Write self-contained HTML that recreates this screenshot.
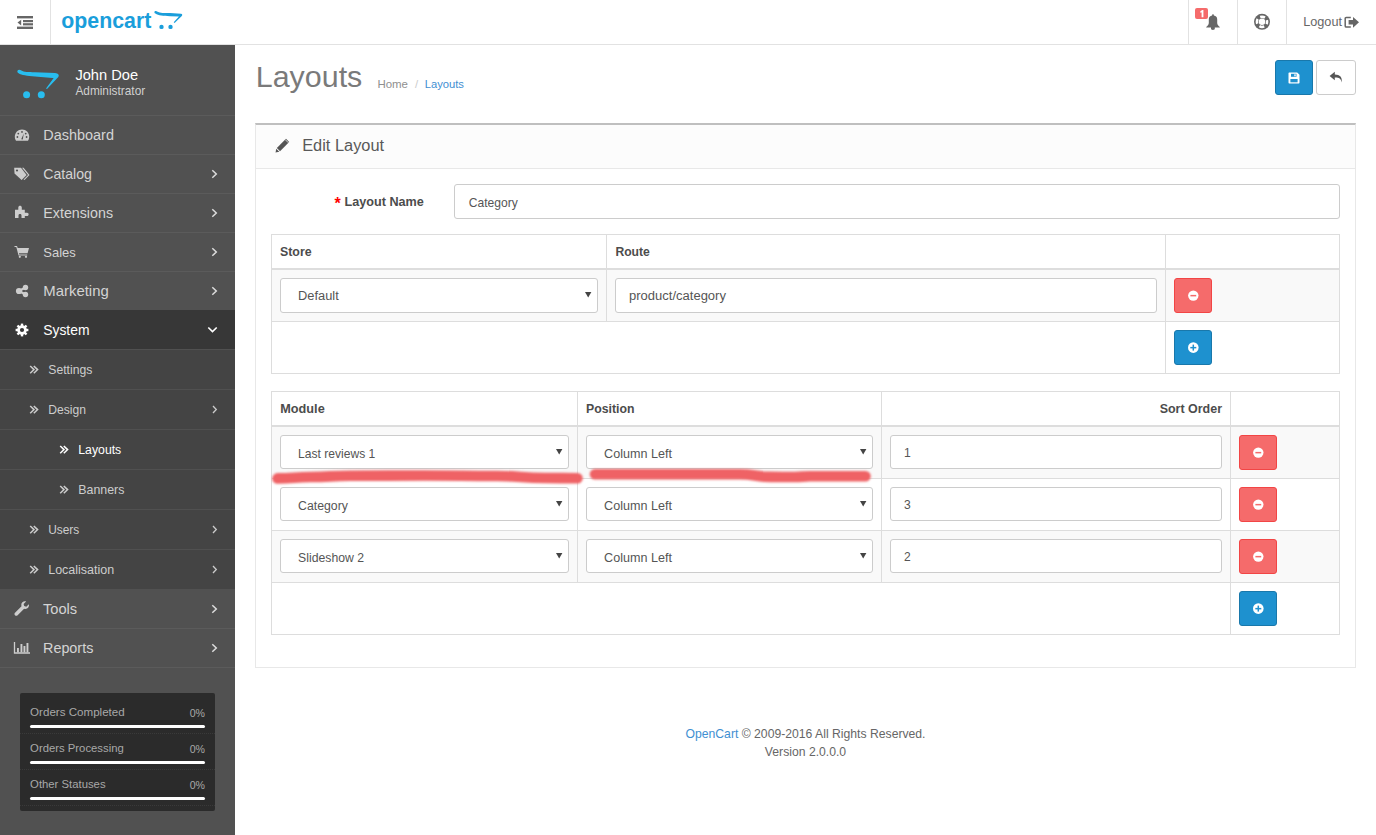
<!DOCTYPE html>
<html><head><meta charset="utf-8"><title>Layouts</title>
<style>
html,body{margin:0;padding:0;width:1376px;height:835px;overflow:hidden;background:#fff;}
body{position:relative;font-family:"Liberation Sans", sans-serif;}
.r{position:absolute;display:block;}
.t{position:absolute;line-height:1;white-space:nowrap;}
</style></head><body>
<div class="r" style="left:0px;top:0px;width:1376px;height:44px;background:#fff"></div>
<div class="r" style="left:0px;top:44px;width:1376px;height:1px;background:#e2e2e2"></div>
<div class="r" style="left:50px;top:0px;width:1px;height:44px;background:#e2e2e2"></div>
<svg class="r" style="left:17px;top:16px" width="16" height="13" viewBox="0 0 16 13"><rect x="0" y="0" width="16" height="2.4" fill="#666"/><rect x="6" y="4" width="10" height="2.2" fill="#666"/><rect x="6" y="7.2" width="10" height="2.2" fill="#666"/><rect x="0" y="10.6" width="16" height="2.4" fill="#666"/><path d="M0.5 6.6 L4.2 3.8 L4.2 9.4 Z" fill="#666"/></svg>
<svg class="r" style="left:58px;top:6px" width="130" height="30" viewBox="0 0 130 30"><text x="3.3" y="21.6" font-family="Liberation Sans" font-weight="bold" font-size="22.6" fill="#1a9edb" textLength="90" lengthAdjust="spacingAndGlyphs">opencart</text><path d="M96.6 5.4 C97.4 4.6 98.6 4.9 99.6 5.7 C102 7.1 106 7 112 7.1 L123 7.7 C124.3 7.8 124.6 9 123.8 9.9 L116.6 16.9 L115.7 16.3 L120.9 10.4 L112 10.3 C105 10.1 100.5 9.6 97.4 7.6 C96.4 6.9 96.1 5.9 96.6 5.4 Z" fill="#1a9edb"/><circle cx="103.5" cy="20.9" r="2.2" fill="#1a9edb"/><circle cx="112.5" cy="20.9" r="2.2" fill="#1a9edb"/></svg>
<div class="r" style="left:1188px;top:0px;width:1px;height:44px;background:#e2e2e2"></div>
<div class="r" style="left:1237px;top:0px;width:1px;height:44px;background:#e2e2e2"></div>
<div class="r" style="left:1286px;top:0px;width:1px;height:44px;background:#e2e2e2"></div>
<svg class="r" style="left:1205px;top:13px" width="16" height="18" viewBox="0 0 16 18"><path d="M8 1.3 C8.6 1.3 8.9 1.8 8.9 2.6 C11 2.9 12.2 4.2 12.2 6.5 L12.2 10 C12.2 11.8 13.6 13.2 14.8 14 L14.8 14.6 L1.2 14.6 L1.2 14 C2.4 13.2 3.8 11.8 3.8 10 L3.8 6.5 C3.8 4.2 5 2.9 7.1 2.6 C7.1 1.8 7.4 1.3 8 1.3 Z M6 14.6 L9.8 14.6 L9.8 15.8 C9.8 16.5 9.2 16.9 7.9 16.9 C6.6 16.9 6 16.5 6 15.8 Z" fill="#666"/></svg>
<div class="r" style="left:1195px;top:8px;width:13px;height:11px;background:#f56b6b;border-radius:2px"></div>
<svg class="r" style="left:1195px;top:8px" width="13" height="11" viewBox="0 0 13 11"><path d="M5.3 3.3 L7.3 2 L8.4 2 L8.4 9.3 L6.6 9.3 L6.6 4.2 L5.6 4.9 Z" fill="#fff"/></svg>
<svg class="r" style="left:1253px;top:13px" width="18" height="18" viewBox="0 0 18 18"><circle cx="9" cy="8.8" r="8" fill="#666"/><circle cx="9" cy="8.8" r="3.2" fill="#fff"/><circle cx="9" cy="8.8" r="5.1" fill="none" stroke="#fff" stroke-width="2.5" stroke-dasharray="5 3.01" stroke-dashoffset="2.5"/></svg>
<div class="t" style="left:1303.2px;top:15.86px;font-size:12.69px;color:#666;">Logout</div>
<svg class="r" style="left:1344px;top:16px" width="16" height="13" viewBox="0 0 16 13"><path d="M6.8 1.5 L2.3 1.5 C1.6 1.5 1.2 1.9 1.2 2.6 L1.2 9.9 C1.2 10.6 1.6 11 2.3 11 L6.8 11" fill="none" stroke="#666" stroke-width="1.5"/><path d="M4.6 4 L9 4 L9 0.9 L15 6.3 L9 11.7 L9 8.6 L4.6 8.6 Z" fill="#666"/></svg>
<div class="r" style="left:0px;top:45px;width:235px;height:790px;background:#515151"></div>
<svg class="r" style="left:15px;top:65px" width="50" height="35" viewBox="0 0 50 35"><path d="M2.6 5.4 C3.6 4.3 5 4.6 6.4 5.6 C9 7.1 13 7.2 20 7.3 L40 8 C43.5 8.3 44.5 10.2 43.3 11.9 L32 23.9 L31 23.5 L38.3 13.6 C38.8 12.9 38.4 12.9 37.5 12.9 L20 11.4 C12 10.9 6.5 10 3.6 8.2 C2.4 7.4 2 6.2 2.6 5.4 Z" fill="#28bdef"/><circle cx="11.6" cy="29.8" r="3.5" fill="#28bdef"/><circle cx="26.3" cy="29.8" r="3.5" fill="#28bdef"/></svg>
<div class="t" style="left:75.4px;top:67.60px;font-size:14.65px;color:#fff;">John Doe</div>
<div class="t" style="left:75.4px;top:86.47px;font-size:11.85px;color:#d0d0d0;">Administrator</div>
<div class="r" style="left:0px;top:115px;width:235px;height:1px;background:#5b5b5b"></div>
<div class="t" style="left:43.3px;top:127.97px;font-size:14.45px;color:#d4d4d4;">Dashboard</div>
<div class="r" style="left:0px;top:154px;width:235px;height:1px;background:#5b5b5b"></div>
<div class="t" style="left:43.3px;top:167.26px;font-size:14.1px;color:#d4d4d4;">Catalog</div>
<div class="r" style="left:0px;top:193px;width:235px;height:1px;background:#5b5b5b"></div>
<svg class="r" style="left:211px;top:169px" width="7" height="10" viewBox="0 0 7 10"><path d="M1.3 1.2 L5.3 5 L1.3 8.8" fill="none" stroke="#ddd" stroke-width="1.5"/></svg>
<div class="t" style="left:43.3px;top:206.14px;font-size:14.25px;color:#d4d4d4;">Extensions</div>
<div class="r" style="left:0px;top:232px;width:235px;height:1px;background:#5b5b5b"></div>
<svg class="r" style="left:211px;top:208px" width="7" height="10" viewBox="0 0 7 10"><path d="M1.3 1.2 L5.3 5 L1.3 8.8" fill="none" stroke="#ddd" stroke-width="1.5"/></svg>
<div class="t" style="left:43.3px;top:246.20px;font-size:12.99px;color:#d4d4d4;">Sales</div>
<div class="r" style="left:0px;top:271px;width:235px;height:1px;background:#5b5b5b"></div>
<svg class="r" style="left:211px;top:247px" width="7" height="10" viewBox="0 0 7 10"><path d="M1.3 1.2 L5.3 5 L1.3 8.8" fill="none" stroke="#ddd" stroke-width="1.5"/></svg>
<div class="t" style="left:43.3px;top:283.57px;font-size:14.92px;color:#d4d4d4;">Marketing</div>
<div class="r" style="left:0px;top:310px;width:235px;height:1px;background:#5b5b5b"></div>
<svg class="r" style="left:211px;top:286px" width="7" height="10" viewBox="0 0 7 10"><path d="M1.3 1.2 L5.3 5 L1.3 8.8" fill="none" stroke="#ddd" stroke-width="1.5"/></svg>
<div class="r" style="left:0px;top:310px;width:235px;height:39px;background:#373737"></div>
<div class="t" style="left:43.2px;top:323.64px;font-size:13.89px;color:#fff;">System</div>
<svg class="r" style="left:207px;top:326px" width="11" height="8" viewBox="0 0 11 8"><path d="M1.3 1.5 L5.5 5.6 L9.7 1.5" fill="none" stroke="#fff" stroke-width="1.6"/></svg>
<div class="r" style="left:0px;top:349px;width:235px;height:240px;background:#444"></div>
<div class="r" style="left:0px;top:349px;width:235px;height:1px;background:#505050"></div>
<div class="t" style="left:48.3px;top:363.77px;font-size:12.2px;color:#cdcdcd;">Settings</div>
<svg class="r" style="left:29px;top:365px" width="11" height="10" viewBox="0 0 11 10"><path d="M1.2 1 L5 4.6 L1.2 8.2 M4.8 1 L8.6 4.6 L4.8 8.2" fill="none" stroke="#cdcdcd" stroke-width="1.5"/></svg>
<div class="r" style="left:0px;top:389px;width:235px;height:1px;background:#505050"></div>
<div class="t" style="left:48.3px;top:403.82px;font-size:12.14px;color:#cdcdcd;">Design</div>
<svg class="r" style="left:29px;top:405px" width="11" height="10" viewBox="0 0 11 10"><path d="M1.2 1 L5 4.6 L1.2 8.2 M4.8 1 L8.6 4.6 L4.8 8.2" fill="none" stroke="#cdcdcd" stroke-width="1.5"/></svg>
<svg class="r" style="left:212px;top:405px" width="6" height="9" viewBox="0 0 6 9"><path d="M1 1 L4.3 4.5 L1 8" fill="none" stroke="#ccc" stroke-width="1.3"/></svg>
<div class="r" style="left:0px;top:429px;width:235px;height:1px;background:#505050"></div>
<div class="t" style="left:78.3px;top:444.00px;font-size:12.28px;color:#fff;">Layouts</div>
<svg class="r" style="left:59px;top:445px" width="11" height="10" viewBox="0 0 11 10"><path d="M1.2 1 L5 4.6 L1.2 8.2 M4.8 1 L8.6 4.6 L4.8 8.2" fill="none" stroke="#fff" stroke-width="1.5"/></svg>
<div class="r" style="left:0px;top:469px;width:235px;height:1px;background:#505050"></div>
<div class="t" style="left:78.3px;top:483.92px;font-size:12.38px;color:#cdcdcd;">Banners</div>
<svg class="r" style="left:59px;top:485px" width="11" height="10" viewBox="0 0 11 10"><path d="M1.2 1 L5 4.6 L1.2 8.2 M4.8 1 L8.6 4.6 L4.8 8.2" fill="none" stroke="#cdcdcd" stroke-width="1.5"/></svg>
<div class="r" style="left:0px;top:509px;width:235px;height:1px;background:#505050"></div>
<div class="t" style="left:48.2px;top:525.02px;font-size:11.91px;color:#cdcdcd;">Users</div>
<svg class="r" style="left:29px;top:525px" width="11" height="10" viewBox="0 0 11 10"><path d="M1.2 1 L5 4.6 L1.2 8.2 M4.8 1 L8.6 4.6 L4.8 8.2" fill="none" stroke="#cdcdcd" stroke-width="1.5"/></svg>
<svg class="r" style="left:212px;top:525px" width="6" height="9" viewBox="0 0 6 9"><path d="M1 1 L4.3 4.5 L1 8" fill="none" stroke="#ccc" stroke-width="1.3"/></svg>
<div class="r" style="left:0px;top:549px;width:235px;height:1px;background:#505050"></div>
<div class="t" style="left:48.2px;top:563.92px;font-size:12.5px;color:#cdcdcd;">Localisation</div>
<svg class="r" style="left:29px;top:565px" width="11" height="10" viewBox="0 0 11 10"><path d="M1.2 1 L5 4.6 L1.2 8.2 M4.8 1 L8.6 4.6 L4.8 8.2" fill="none" stroke="#cdcdcd" stroke-width="1.5"/></svg>
<svg class="r" style="left:212px;top:565px" width="6" height="9" viewBox="0 0 6 9"><path d="M1 1 L4.3 4.5 L1 8" fill="none" stroke="#ccc" stroke-width="1.3"/></svg>
<div class="t" style="left:43px;top:601.80px;font-size:14.65px;color:#d4d4d4;">Tools</div>
<div class="r" style="left:0px;top:628px;width:235px;height:1px;background:#5b5b5b"></div>
<svg class="r" style="left:211px;top:604px" width="7" height="10" viewBox="0 0 7 10"><path d="M1.3 1.2 L5.3 5 L1.3 8.8" fill="none" stroke="#ddd" stroke-width="1.5"/></svg>
<div class="t" style="left:43px;top:641.02px;font-size:14.39px;color:#d4d4d4;">Reports</div>
<div class="r" style="left:0px;top:667px;width:235px;height:1px;background:#5b5b5b"></div>
<svg class="r" style="left:211px;top:643px" width="7" height="10" viewBox="0 0 7 10"><path d="M1.3 1.2 L5.3 5 L1.3 8.8" fill="none" stroke="#ddd" stroke-width="1.5"/></svg>
<svg class="r" style="left:14px;top:128.3px" width="16" height="14" viewBox="0 0 16 14"><path d="M8 1.5 C3.9 1.5 0.8 4.7 0.8 8.7 C0.8 10.2 1.2 11.6 2 12.7 L14 12.7 C14.8 11.6 15.2 10.2 15.2 8.7 C15.2 4.7 12.1 1.5 8 1.5 Z" fill="#cdcdcd"/><g fill="#515151"><circle cx="3.4" cy="9" r="0.9"/><circle cx="4.3" cy="5.6" r="0.9"/><circle cx="8" cy="3.9" r="0.9"/><circle cx="11.7" cy="5.6" r="0.9"/><circle cx="12.6" cy="9" r="0.9"/><path d="M7.2 11.3 L9.8 5.5 L8.8 11.5 Z"/></g></svg>
<svg class="r" style="left:13px;top:166px" width="18" height="16" viewBox="0 0 18 16"><path d="M1.2 1.8 L8 1.8 L13.6 9 L8.6 14 L1.5 7.5 Z" fill="#cdcdcd"/><circle cx="4" cy="4.5" r="1.1" fill="#515151"/><path d="M9 1.8 L10.6 1.8 L16.5 9 L11.5 14 L10.5 13.4 L15 9 Z" fill="#cdcdcd"/></svg>
<svg class="r" style="left:14px;top:204px" width="16" height="15" viewBox="0 0 16 15"><path d="M1 5.8 L4.3 5.8 L4.3 3.4 C4.3 1.3 7.8 1.3 7.8 3.4 L7.8 5.8 L10.8 5.8 L10.8 8.8 L13 8.8 C15.2 8.8 15.2 12.1 13 12.1 L10.8 12.1 L10.8 14 L7.5 14 L7.5 11.4 C7.5 9.5 4.5 9.5 4.5 11.4 L4.5 14 L1 14 Z" fill="#cdcdcd"/></svg>
<svg class="r" style="left:14px;top:245px" width="16" height="13" viewBox="0 0 16 13"><path d="M0.5 1 L3 1 L3.7 3 L15 3 L13.6 8.3 L4.9 8.3 L5.3 9.5 L13.2 9.5 L13.2 10.4 L4.5 10.4 L2.3 2 L0.5 2 Z" fill="#cdcdcd"/><circle cx="5.8" cy="11.8" r="1.1" fill="#cdcdcd"/><circle cx="12" cy="11.8" r="1.1" fill="#cdcdcd"/></svg>
<svg class="r" style="left:14px;top:283px" width="16" height="16" viewBox="0 0 16 16"><circle cx="5" cy="8" r="3.1" fill="#cdcdcd"/><circle cx="11.5" cy="4.5" r="2.7" fill="#cdcdcd"/><circle cx="11.5" cy="11.5" r="2.7" fill="#cdcdcd"/><path d="M5 8 L11.5 4.5 M5 8 L11.5 11.5" stroke="#cdcdcd" stroke-width="2.4"/></svg>
<svg class="r" style="left:15px;top:323px" width="14" height="14" viewBox="0 0 14 14"><circle cx="7" cy="7" r="4.8" fill="#fff"/><g fill="#fff"><rect x="5.8" y="0.6" width="2.4" height="3"/><rect x="5.8" y="10.4" width="2.4" height="3"/><rect x="0.6" y="5.8" width="3" height="2.4"/><rect x="10.4" y="5.8" width="3" height="2.4"/><rect x="5.8" y="0.6" width="2.4" height="3" transform="rotate(45 7 7)"/><rect x="5.8" y="10.4" width="2.4" height="3" transform="rotate(45 7 7)"/><rect x="0.6" y="5.8" width="3" height="2.4" transform="rotate(45 7 7)"/><rect x="10.4" y="5.8" width="3" height="2.4" transform="rotate(45 7 7)"/></g><circle cx="7" cy="7" r="2.1" fill="#373737"/></svg>
<svg class="r" style="left:14px;top:601px" width="16" height="15" viewBox="0 0 16 15"><path d="M14.8 3.2 C15.5 5.3 14.2 8 11.5 8 C10.9 8 10.5 7.9 10.1 7.8 L3.6 14.3 C2.9 15 1.7 15 1 14.3 C0.3 13.6 0.3 12.4 1 11.7 L7.5 5.2 C7.4 4.8 7.3 4.4 7.3 3.8 C7.3 1.1 10 -0.2 12.1 0.5 L9.6 3 L10.2 5.1 L12.3 5.7 Z" fill="#cdcdcd"/></svg>
<svg class="r" style="left:13px;top:641px" width="18" height="14" viewBox="0 0 18 14"><path d="M1.5 1 L1.5 12 L17 12" fill="none" stroke="#cdcdcd" stroke-width="1.3"/><g fill="#cdcdcd"><rect x="4" y="7" width="1.9" height="4.3"/><rect x="7.5" y="3" width="1.9" height="8.3"/><rect x="10.5" y="5" width="1.9" height="6.3"/><rect x="13.5" y="2" width="1.9" height="9.3"/></g></svg>
<div class="r" style="left:20px;top:693px;width:195px;height:118px;background:#2b2b2b;border-radius:2px"></div>
<div class="t" style="left:30.1px;top:706.70px;font-size:11.58px;color:#a8a8a8;">Orders Completed</div>
<div class="r" style="left:20px;top:733px;width:195px;height:0px;border-top:1px dotted #3a3a3a"></div>
<div class="t" style="right:1171px;top:707.54px;font-size:10.59px;color:#a8a8a8;">0%</div>
<div class="r" style="left:30px;top:725px;width:175px;height:3px;background:#fff;border-radius:1.5px"></div>
<div class="t" style="left:30.1px;top:742.92px;font-size:11.32px;color:#a8a8a8;">Orders Processing</div>
<div class="r" style="left:20px;top:769px;width:195px;height:0px;border-top:1px dotted #3a3a3a"></div>
<div class="t" style="right:1171px;top:743.54px;font-size:10.59px;color:#a8a8a8;">0%</div>
<div class="r" style="left:30px;top:761px;width:175px;height:3px;background:#fff;border-radius:1.5px"></div>
<div class="t" style="left:30.1px;top:778.92px;font-size:11.32px;color:#a8a8a8;">Other Statuses</div>
<div class="r" style="left:20px;top:805px;width:195px;height:0px;border-top:1px dotted #3a3a3a"></div>
<div class="t" style="right:1171px;top:779.54px;font-size:10.59px;color:#a8a8a8;">0%</div>
<div class="r" style="left:30px;top:797px;width:175px;height:3px;background:#fff;border-radius:1.5px"></div>
<div class="t" style="left:255.8px;top:60.96px;font-size:30.41px;color:#7a7a7a;">Layouts</div>
<div class="t" style="left:377.4px;top:78.89px;font-size:11.47px;color:#8f8f8f;">Home</div>
<div class="t" style="left:415px;top:78.95px;font-size:11.4px;color:#ccc;">/</div>
<div class="t" style="left:424.7px;top:79.10px;font-size:11.22px;color:#3f8fd2;">Layouts</div>
<div class="r" style="left:1275px;top:60px;width:38px;height:35px;background:#1e91cf;border:1px solid #1978ab;box-sizing:border-box;border-radius:3px"></div>
<svg class="r" style="left:1288px;top:72px" width="12" height="12" viewBox="0 0 12 12"><path d="M0.5 1.5 C0.5 0.9 0.9 0.5 1.5 0.5 L9.2 0.5 L11.5 2.8 L11.5 10.5 C11.5 11.1 11.1 11.5 10.5 11.5 L1.5 11.5 C0.9 11.5 0.5 11.1 0.5 10.5 Z" fill="#fff"/><rect x="3" y="1.8" width="5.5" height="3" fill="#1e91cf"/><rect x="6.3" y="2.3" width="1.4" height="2" fill="#fff"/><rect x="2.4" y="7" width="7.2" height="3.3" fill="#1e91cf"/></svg>
<div class="r" style="left:1316px;top:60px;width:40px;height:35px;background:#fff;border:1px solid #ccc;box-sizing:border-box;border-radius:3px"></div>
<svg class="r" style="left:1329px;top:71px" width="14" height="12" viewBox="0 0 14 12"><path d="M5.8 0.8 L0.6 5 L5.8 9.2 L5.8 6.6 C9.8 6.4 12 7.6 12.6 11.5 C13.6 6.2 11 3.4 5.8 3.4 Z" fill="#555"/></svg>
<div class="r" style="left:255px;top:123px;width:1101px;height:545px;background:#fff;border:1px solid #e8e8e8;border-top:2px solid #bfbfbf;box-sizing:border-box"></div>
<div class="r" style="left:256px;top:125px;width:1099px;height:43px;background:#fcfcfc"></div>
<div class="r" style="left:256px;top:168px;width:1099px;height:1px;background:#e8e8e8"></div>
<svg class="r" style="left:275px;top:138px" width="15" height="15" viewBox="0 0 15 15"><path d="M11 0.8 L14.2 4 L5 13.2 L1.8 10 Z" fill="#555"/><path d="M1.3 10.7 L4.3 13.7 L0.5 14.5 Z" fill="#555"/><path d="M10.2 1.6 L13.4 4.8" stroke="#fcfcfc" stroke-width="0.8"/><path d="M2.4 11.2 L3.8 12.6" stroke="#fcfcfc" stroke-width="0.6"/></svg>
<div class="t" style="left:302.2px;top:137.03px;font-size:16.39px;color:#595959;">Edit Layout</div>
<div class="t" style="left:334.6px;top:196.46px;font-size:16px;color:#f00;font-weight:bold;">*</div>
<div class="t" style="left:344.6px;top:195.71px;font-size:12.63px;color:#4c4c4c;font-weight:bold;">Layout Name</div>
<div class="r" style="left:454px;top:184px;width:886px;height:35px;background:#fff;border:1px solid #ccc;box-sizing:border-box;border-radius:3px"></div>
<div class="t" style="left:468.8px;top:196.56px;font-size:12.1px;color:#555;">Category</div>
<div class="r" style="left:271px;top:234px;width:1069px;height:140px;background:#fff;border:1px solid #ddd;box-sizing:border-box"></div>
<div class="r" style="left:272px;top:270px;width:1067px;height:51px;background:#f9f9f9"></div>
<div class="r" style="left:272px;top:268px;width:1067px;height:2px;background:#ddd"></div>
<div class="r" style="left:272px;top:321px;width:1067px;height:1px;background:#ddd"></div>
<div class="r" style="left:606px;top:235px;width:1px;height:86px;background:#ddd"></div>
<div class="r" style="left:1165px;top:235px;width:1px;height:138px;background:#ddd"></div>
<div class="t" style="left:280px;top:246.14px;font-size:12.36px;color:#4c4c4c;font-weight:bold;">Store</div>
<div class="t" style="left:615.4px;top:246.29px;font-size:12.18px;color:#4c4c4c;font-weight:bold;">Route</div>
<div class="r" style="left:280px;top:278px;width:318px;height:35px;background:#fff;border:1px solid #ccc;box-sizing:border-box;border-radius:3px"></div>
<div class="t" style="left:298.1px;top:290.32px;font-size:12.85px;color:#555;">Default</div>
<svg class="r" style="left:585px;top:291.8px" width="7" height="6" viewBox="0 0 7 6"><path d="M0 0 L6.4 0 L3.2 5.6 Z" fill="#444"/></svg>
<div class="r" style="left:615px;top:278px;width:542px;height:35px;background:#fff;border:1px solid #ccc;box-sizing:border-box;border-radius:3px"></div>
<div class="t" style="left:629px;top:289.28px;font-size:13.02px;color:#555;">product/category</div>
<div class="r" style="left:1174px;top:278px;width:38px;height:35px;background:#f56b6b;border:1px solid #f24545;box-sizing:border-box;border-radius:3px"></div>
<svg class="r" style="left:1187px;top:289px" width="13" height="13" viewBox="0 0 13 13"><circle cx="6.3" cy="6.6" r="5.2" fill="#fff"/><rect x="3.4" y="5.9" width="5.8" height="1.5" fill="#f56b6b"/></svg>
<div class="r" style="left:1174px;top:330px;width:38px;height:35px;background:#1e91cf;border:1px solid #1978ab;box-sizing:border-box;border-radius:3px"></div>
<svg class="r" style="left:1187px;top:341px" width="13" height="13" viewBox="0 0 13 13"><circle cx="6.3" cy="6.6" r="5.3" fill="#fff"/><rect x="3.3" y="5.9" width="6" height="1.5" fill="#1e91cf"/><rect x="5.55" y="3.6" width="1.5" height="6" fill="#1e91cf"/></svg>
<div class="r" style="left:271px;top:391px;width:1069px;height:244px;background:#fff;border:1px solid #ddd;box-sizing:border-box"></div>
<div class="r" style="left:272px;top:427px;width:1067px;height:51px;background:#f9f9f9"></div>
<div class="r" style="left:272px;top:531px;width:1067px;height:51px;background:#f9f9f9"></div>
<div class="r" style="left:272px;top:425px;width:1067px;height:2px;background:#ddd"></div>
<div class="r" style="left:272px;top:478px;width:1067px;height:1px;background:#ddd"></div>
<div class="r" style="left:272px;top:530px;width:1067px;height:1px;background:#ddd"></div>
<div class="r" style="left:272px;top:582px;width:1067px;height:1px;background:#ddd"></div>
<div class="r" style="left:577px;top:392px;width:1px;height:190px;background:#ddd"></div>
<div class="r" style="left:881px;top:392px;width:1px;height:190px;background:#ddd"></div>
<div class="r" style="left:1230px;top:392px;width:1px;height:242px;background:#ddd"></div>
<div class="t" style="left:280.3px;top:402.66px;font-size:12.69px;color:#4c4c4c;font-weight:bold;">Module</div>
<div class="t" style="left:586px;top:403.01px;font-size:12.27px;color:#4c4c4c;font-weight:bold;">Position</div>
<div class="t" style="right:154px;top:402.84px;font-size:12.48px;color:#4c4c4c;font-weight:bold;">Sort Order</div>
<div class="r" style="left:280px;top:435px;width:289px;height:34px;background:#fff;border:1px solid #ccc;box-sizing:border-box;border-radius:3px"></div>
<div class="t" style="left:298.1px;top:447.97px;font-size:12.08px;color:#555;">Last reviews 1</div>
<svg class="r" style="left:556px;top:448.8px" width="7" height="6" viewBox="0 0 7 6"><path d="M0 0 L6.4 0 L3.2 5.6 Z" fill="#444"/></svg>
<div class="r" style="left:586px;top:435px;width:287px;height:34px;background:#fff;border:1px solid #ccc;box-sizing:border-box;border-radius:3px"></div>
<div class="t" style="left:604.1px;top:447.54px;font-size:12.59px;color:#555;">Column Left</div>
<svg class="r" style="left:860px;top:448.8px" width="7" height="6" viewBox="0 0 7 6"><path d="M0 0 L6.4 0 L3.2 5.6 Z" fill="#444"/></svg>
<div class="r" style="left:890px;top:435px;width:332px;height:34px;background:#fff;border:1px solid #ccc;box-sizing:border-box;border-radius:3px"></div>
<div class="t" style="left:904px;top:447.06px;font-size:12.1px;color:#555;">1</div>
<div class="r" style="left:1239px;top:435px;width:38px;height:35px;background:#f56b6b;border:1px solid #f24545;box-sizing:border-box;border-radius:3px"></div>
<svg class="r" style="left:1252px;top:446px" width="13" height="13" viewBox="0 0 13 13"><circle cx="6.3" cy="6.6" r="5.2" fill="#fff"/><rect x="3.4" y="5.9" width="5.8" height="1.5" fill="#f56b6b"/></svg>
<div class="r" style="left:280px;top:487px;width:289px;height:34px;background:#fff;border:1px solid #ccc;box-sizing:border-box;border-radius:3px"></div>
<div class="t" style="left:298.1px;top:499.81px;font-size:12.27px;color:#555;">Category</div>
<svg class="r" style="left:556px;top:500.8px" width="7" height="6" viewBox="0 0 7 6"><path d="M0 0 L6.4 0 L3.2 5.6 Z" fill="#444"/></svg>
<div class="r" style="left:586px;top:487px;width:287px;height:34px;background:#fff;border:1px solid #ccc;box-sizing:border-box;border-radius:3px"></div>
<div class="t" style="left:604.1px;top:499.54px;font-size:12.59px;color:#555;">Column Left</div>
<svg class="r" style="left:860px;top:500.8px" width="7" height="6" viewBox="0 0 7 6"><path d="M0 0 L6.4 0 L3.2 5.6 Z" fill="#444"/></svg>
<div class="r" style="left:890px;top:487px;width:332px;height:34px;background:#fff;border:1px solid #ccc;box-sizing:border-box;border-radius:3px"></div>
<div class="t" style="left:904px;top:499.06px;font-size:12.1px;color:#555;">3</div>
<div class="r" style="left:1239px;top:487px;width:38px;height:35px;background:#f56b6b;border:1px solid #f24545;box-sizing:border-box;border-radius:3px"></div>
<svg class="r" style="left:1252px;top:498px" width="13" height="13" viewBox="0 0 13 13"><circle cx="6.3" cy="6.6" r="5.2" fill="#fff"/><rect x="3.4" y="5.9" width="5.8" height="1.5" fill="#f56b6b"/></svg>
<div class="r" style="left:280px;top:539px;width:289px;height:34px;background:#fff;border:1px solid #ccc;box-sizing:border-box;border-radius:3px"></div>
<div class="t" style="left:298.1px;top:551.84px;font-size:12.24px;color:#555;">Slideshow 2</div>
<svg class="r" style="left:556px;top:552.8px" width="7" height="6" viewBox="0 0 7 6"><path d="M0 0 L6.4 0 L3.2 5.6 Z" fill="#444"/></svg>
<div class="r" style="left:586px;top:539px;width:287px;height:34px;background:#fff;border:1px solid #ccc;box-sizing:border-box;border-radius:3px"></div>
<div class="t" style="left:604.1px;top:551.54px;font-size:12.59px;color:#555;">Column Left</div>
<svg class="r" style="left:860px;top:552.8px" width="7" height="6" viewBox="0 0 7 6"><path d="M0 0 L6.4 0 L3.2 5.6 Z" fill="#444"/></svg>
<div class="r" style="left:890px;top:539px;width:332px;height:34px;background:#fff;border:1px solid #ccc;box-sizing:border-box;border-radius:3px"></div>
<div class="t" style="left:904px;top:551.06px;font-size:12.1px;color:#555;">2</div>
<div class="r" style="left:1239px;top:539px;width:38px;height:35px;background:#f56b6b;border:1px solid #f24545;box-sizing:border-box;border-radius:3px"></div>
<svg class="r" style="left:1252px;top:550px" width="13" height="13" viewBox="0 0 13 13"><circle cx="6.3" cy="6.6" r="5.2" fill="#fff"/><rect x="3.4" y="5.9" width="5.8" height="1.5" fill="#f56b6b"/></svg>
<div class="r" style="left:1239px;top:591px;width:38px;height:35px;background:#1e91cf;border:1px solid #1978ab;box-sizing:border-box;border-radius:3px"></div>
<svg class="r" style="left:1252px;top:602px" width="13" height="13" viewBox="0 0 13 13"><circle cx="6.3" cy="6.6" r="5.3" fill="#fff"/><rect x="3.3" y="5.9" width="6" height="1.5" fill="#1e91cf"/><rect x="5.55" y="3.6" width="1.5" height="6" fill="#1e91cf"/></svg>
<svg class="r" style="left:260px;top:455px" width="630" height="40" viewBox="0 0 630 40"><defs><filter id="bl" filterUnits="userSpaceOnUse" x="0" y="0" width="630" height="40"><feGaussianBlur stdDeviation="1.3"/></filter></defs><g fill="none" stroke="#ef6265" stroke-linecap="round" stroke-width="10.6" filter="url(#bl)"><path d="M17.5 23.4 C34.2 23.4 34.2 22.0 51.0 22.0 C70.5 22.0 70.5 20.8 90.0 20.8 C127.5 20.8 127.5 20.5 165.0 20.5 C201.0 20.5 201.0 21.0 237.0 21.0 C261.0 21.0 261.0 23.0 285.0 23.0 C301.2 23.0 301.2 23.2 317.5 23.2"/><path d="M335.0 19.2 C407.5 19.2 407.5 19.2 480.0 19.2 C495.0 19.2 495.0 21.9 510.0 21.9 C522.5 21.9 522.5 22.0 535.0 22.0 C542.5 22.0 542.5 21.3 550.0 21.3 C577.8 21.3 577.8 21.3 605.5 21.3"/></g></svg>
<div class="t" style="left:605.5px;width:400px;text-align:center;top:727.87px;font-size:12.2px;color:#666;"><span style="color:#3f8fd2">OpenCart</span> &copy; 2009-2016 All Rights Reserved.</div>
<div class="t" style="left:605.5px;width:400px;text-align:center;top:745.87px;font-size:12.2px;color:#666;">Version 2.0.0.0</div>
</body></html>
